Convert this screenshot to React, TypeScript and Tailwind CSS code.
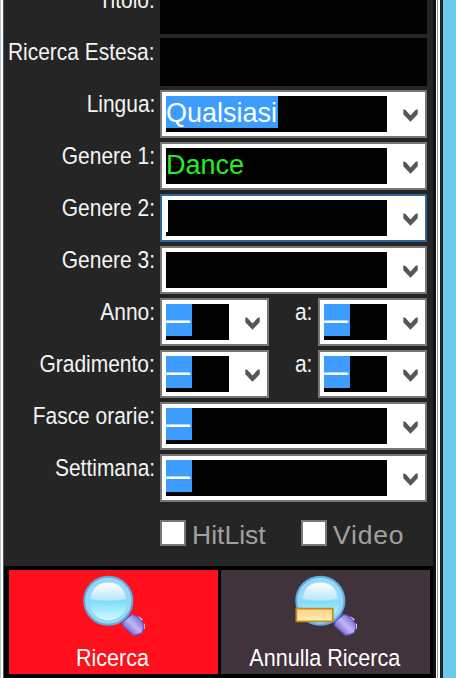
import React from "react";
import clsx from "clsx";

const Label = ({ text, className }: { text: string; className?: string }) => (
  <div className={clsx("flex h-12 shrink-0 justify-end", className)}>
    <span className="origin-right scale-x-[0.855] whitespace-nowrap text-[24.5px] leading-7 text-[#f4f4f4]">
      {text}
    </span>
  </div>
);

const Chevron = () => (
  <svg className="mt-0.5 h-[13px] w-[15px]" viewBox="0 0 15 13" fill="#555555">
    <path d="M0.3 0.3L2.5 1L7.5 6.5L12.5 1L14.7 0.3V5.2L7.5 12.8L0.3 5.2Z" />
  </svg>
);

interface IComboProps {
  value?: string;
  selected?: boolean;
  focused?: boolean;
  className?: string;
}

const Combo = ({ value, selected, focused, className }: IComboProps) => (
  <div
    className={clsx(
      "flex h-12 shrink-0 border-2 bg-white py-1 pl-1",
      focused ? "border-[#2d6698]" : "border-[#777777]",
      className
    )}
  >
    <div className="flex h-9 flex-1 items-start overflow-hidden bg-black text-[27px] leading-[34px]">
      {focused && <span className="h-8 w-0.5 bg-white" />}
      {value && (
        <span
          className={clsx(
            "h-8 whitespace-nowrap",
            selected ? "bg-[#3c9cff] pr-px text-white" : "text-[#20f020]"
          )}
        >
          {value}
        </span>
      )}
    </div>
    <div className="flex w-[38px] items-center justify-center pl-2">
      <Chevron />
    </div>
  </div>
);

// "any" marker shown by the range and time combos
const EmptyCombo = ({ className }: { className?: string }) => (
  <div className={clsx("flex h-12 shrink-0 border-2 border-[#777777] bg-white py-1 pl-1", className)}>
    <div className="flex h-9 flex-1 items-start overflow-hidden bg-black">
      <span className="h-8 w-[26px] bg-[#3c9cff] text-[24px] font-bold leading-[31px] text-white">
        —
      </span>
    </div>
    <div className="flex w-[38px] items-center justify-center pl-2">
      <Chevron />
    </div>
  </div>
);

const Row = ({ label, children }: { label: string; children: React.ReactNode }) => (
  <div className="flex h-12 shrink-0">
    <Label text={label} className="mr-[5px] w-[151px]" />
    {children}
  </div>
);

const RangeRow = ({ label }: { label: string }) => (
  <Row label={label}>
    <EmptyCombo className="w-[109px]" />
    <Label text="a:" className="mr-[6px] w-[43px]" />
    <EmptyCombo className="w-[109px]" />
  </Row>
);

const CheckOption = ({ text, className }: { text: string; className?: string }) => (
  <div className={clsx("flex items-center", className)}>
    <span className="size-[26px] border-2 border-[#777777] bg-white" />
    <span className="ml-1.5 mt-1 text-[26.5px] leading-8 text-[#a0a0a0]">{text}</span>
  </div>
);

const SearchIcon = ({ id, minus }: { id: string; minus?: boolean }) => (
  <svg className="size-16" viewBox="-0.8 0.2 64 64">
    <defs>
      <linearGradient id={`${id}-lens`} x1="0" y1="0" x2="0" y2="1">
        <stop offset="0" stopColor="#b4e2fa" />
        <stop offset="0.42" stopColor="#9be0fc" />
        <stop offset="0.52" stopColor="#80dcfc" />
        <stop offset="1" stopColor="#d2fcff" />
      </linearGradient>
      <linearGradient id={`${id}-shine`} x1="0" y1="0" x2="0" y2="1">
        <stop offset="0" stopColor="#ffffff" />
        <stop offset="1" stopColor="#b4e6fc" />
      </linearGradient>
      <linearGradient id={`${id}-handle`} x1="0" y1="1" x2="1" y2="0">
        <stop offset="0.1" stopColor="#5a50c0" />
        <stop offset="0.5" stopColor="#c0b8f4" />
        <stop offset="0.9" stopColor="#6a5ccc" />
      </linearGradient>
      <linearGradient id={`${id}-bar`} x1="0" y1="0" x2="0" y2="1">
        <stop offset="0" stopColor="#ffd083" />
        <stop offset="1" stopColor="#ffedb4" />
      </linearGradient>
    </defs>
    <path d="M55 43l4 3M60.500 49v5" stroke="#ffffff" strokeWidth="3" />
    <path
      d="M40 47L49 39.500Q53 40 57 44L60 48Q62 54 59 58Q54 61 50 60L40 51Z"
      fill={`url(#${id}-handle)`}
      stroke="#6354c0"
      strokeWidth="1.2"
    />
    <circle cx="25.5" cy="26" r="24" fill="#9bd8f8" stroke="#5aafe4" strokeWidth="2" />
    <circle cx="25.5" cy="26" r="20" fill={`url(#${id}-lens)`} stroke="#8fd0f4" strokeWidth="1" />
    <path d="M8.500 24Q10 8 25.500 8Q41 8 42.500 24Q25 28 8.500 24Z" fill={`url(#${id}-shine)`} />
    {minus && (
      <rect x="1.500" y="33.800" width="36.500" height="12.800" fill={`url(#${id}-bar)`} stroke="#bd8a1c" strokeWidth="1.700" />
    )}
  </svg>
);

const ActionButton = ({
  text,
  minus,
  className,
}: {
  text: string;
  minus?: boolean;
  className?: string;
}) => (
  <button className={clsx("flex h-[104px] flex-col items-center pt-[5px]", className)}>
    <SearchIcon id={minus ? "reset" : "search"} minus={minus} />
    <span className="mr-0.5 mt-[5px] scale-x-[0.88] whitespace-nowrap text-[24.5px] leading-7 text-white">
      {text}
    </span>
  </button>
);

const App = () => {
  return (
    <div className="flex h-[678px] w-[456px] overflow-hidden bg-[#6cc9ea] font-['Liberation_Sans',sans-serif]">
      <div className="w-px bg-[#b5cbdc]" />
      <div className="w-0.5 bg-white" />
      <div className="w-px bg-[#555555]" />

      <div className="flex w-[429px] shrink-0 flex-col bg-[#252525]">
        <div className="-mt-3.5 flex flex-col gap-1">
          <Row label="Titolo:">
            <div className="w-[267px] bg-black" />
          </Row>
          <Row label="Ricerca Estesa:">
            <div className="w-[267px] bg-black" />
          </Row>
          <Row label="Lingua:">
            <Combo value="Qualsiasi" selected className="w-[267px]" />
          </Row>
          <Row label="Genere 1:">
            <Combo value="Dance" className="w-[267px]" />
          </Row>
          <Row label="Genere 2:">
            <Combo focused className="w-[267px]" />
          </Row>
          <Row label="Genere 3:">
            <Combo className="w-[267px]" />
          </Row>
          <RangeRow label="Anno:" />
          <RangeRow label="Gradimento:" />
          <Row label="Fasce orarie:">
            <EmptyCombo className="w-[267px]" />
          </Row>
          <Row label="Settimana:">
            <EmptyCombo className="w-[267px]" />
          </Row>
        </div>

        <div className="mt-[15px] flex h-8 pl-[156px]">
          <CheckOption text="HitList" className="w-[141px]" />
          <CheckOption text="Video" className="tracking-[0.8px]" />
        </div>

        <div className="mt-[17px] flex h-28 gap-[3px] bg-black py-1 pl-[5px]">
          <ActionButton text="Ricerca" className="w-[209px] bg-[#ff101c]" />
          <ActionButton text="Annulla Ricerca" minus className="w-[209px] bg-[#40333c]" />
        </div>
      </div>

      <div className="w-[3px] bg-[#111111]" />
      <div className="w-px bg-white" />
      <div className="w-px bg-[#999999]" />
      <div className="w-0.5 bg-white" />
      <div className="w-[3px] bg-[#222222]" />
    </div>
  );
};

export default App;
